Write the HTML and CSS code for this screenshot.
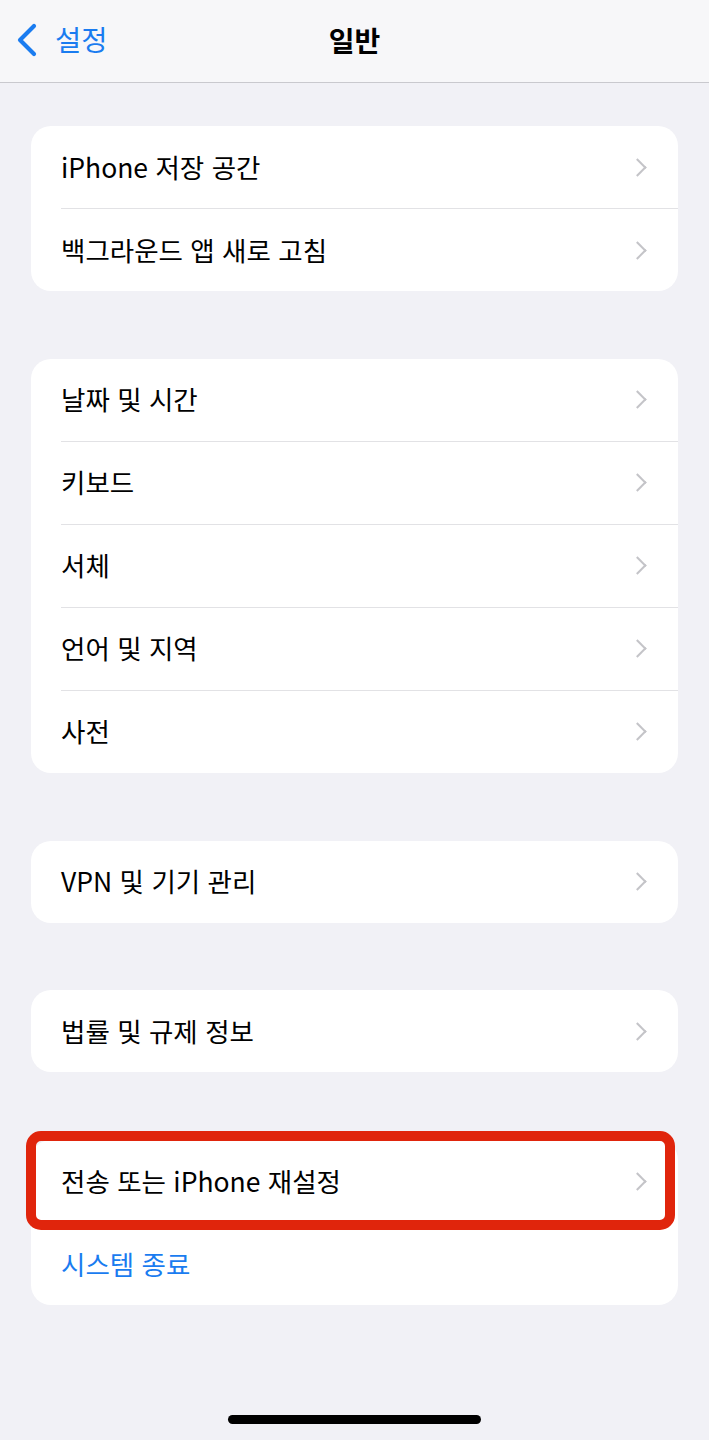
FILE: index.html
```html
<!DOCTYPE html>
<html lang="ko">
<head>
  <meta charset="utf-8">
  <title>일반</title>
  <link rel="stylesheet" href="styles.css">
</head>
<body>
  <div class="navbar">
    <div class="back">
      <svg class="back-icon" width="22" height="34" viewBox="0 0 22 34">
        <path d="M18 3 L4 17 L18 31" fill="none" stroke="#1a7cf0" stroke-width="4.2" stroke-linecap="round" stroke-linejoin="round"/>
      </svg>
      <span>설정</span>
    </div>
    <h1 class="title">일반</h1>
  </div>

  <div class="content">
    <div class="group">
      <div class="row"><span>iPhone 저장 공간</span><i class="chevron"></i></div>
      <div class="row"><span>백그라운드 앱 새로 고침</span><i class="chevron"></i></div>
    </div>

    <div class="group">
      <div class="row"><span>날짜 및 시간</span><i class="chevron"></i></div>
      <div class="row"><span>키보드</span><i class="chevron"></i></div>
      <div class="row"><span>서체</span><i class="chevron"></i></div>
      <div class="row"><span>언어 및 지역</span><i class="chevron"></i></div>
      <div class="row"><span>사전</span><i class="chevron"></i></div>
    </div>

    <div class="group">
      <div class="row"><span>VPN 및 기기 관리</span><i class="chevron"></i></div>
    </div>

    <div class="group">
      <div class="row"><span>법률 및 규제 정보</span><i class="chevron"></i></div>
    </div>

    <div class="group">
      <div class="row highlighted"><span>전송 또는 iPhone 재설정</span><i class="chevron"></i></div>
      <div class="row action"><span>시스템 종료</span></div>
    </div>
  </div>

  <div class="home-indicator"></div>
</body>
</html>
```

FILE: styles.css
```css
body {
  margin: 0;
  padding: 0;
  width: 709px;
  height: 1440px;
  background-color: #f1f1f6;
  font-family: "Noto Sans CJK KR", "Noto Sans", sans-serif;
  color: #000;
  position: relative;
  overflow: hidden;
}

.navbar {
  height: 83px;
  background-color: #f7f7f9;
  border-bottom: 1px solid #c9c9ce;
  position: relative;
  display: flex;
  align-items: center;
  justify-content: center;
  box-sizing: border-box;
}

.back {
  position: absolute;
  left: 16px;
  top: 22px;
  display: flex;
  align-items: center;
  gap: 17px;
  color: #1a7cf0;
  font-size: 28.5px;
}

.back span {
  line-height: 38px;
  margin-top: -2px;
}

.title {
  margin: 0;
  font-size: 28px;
  font-weight: bold;
  line-height: 38px;
  margin-top: -3px;
}

.content {
  padding: 43px 31px 0 31px;
  display: flex;
  flex-direction: column;
  gap: 67.75px;
}

.group {
  background-color: #fff;
  border-radius: 20px;
}

.row {
  height: 83px;
  display: flex;
  align-items: center;
  justify-content: space-between;
  margin-left: 30px;
  padding-right: 34px;
  font-size: 26.5px;
  border-bottom: 1px solid #e2e2e5;
  box-sizing: border-box;
  position: relative;
}

.row:last-child {
  border-bottom: none;
  height: 82px;
}

.row span {
  margin-top: -2px;
}

.chevron {
  width: 11px;
  height: 11px;
  border-right: 2.5px solid #c4c4c8;
  border-top: 2.5px solid #c4c4c8;
  transform: rotate(45deg);
}

.row.action {
  color: #1a7cf0;
}

.highlighted {
  border-bottom: none;
}

.highlighted::after {
  content: "";
  position: absolute;
  left: -35px;
  top: -9px;
  right: 3px;
  bottom: -7px;
  border: 10px solid #e0250c;
  border-radius: 15px;
}

.home-indicator {
  position: absolute;
  left: 228px;
  top: 1415px;
  width: 253px;
  height: 9px;
  border-radius: 5px;
  background-color: #000;
}
```
